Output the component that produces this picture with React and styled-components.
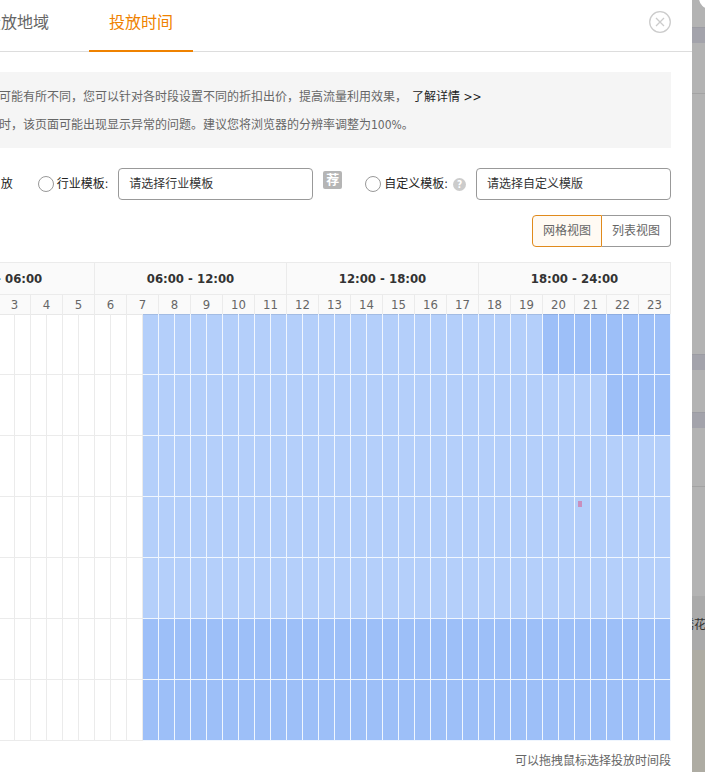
import React from "react";
import styled, { createGlobalStyle, css } from "styled-components";

const GlobalStyle = createGlobalStyle`
  *, *::before, *::after { box-sizing: border-box; }
  body {
    margin: 0;
    background: #fff;
    color: #666;
    font-family: "DejaVu Sans Condensed", "Noto Sans", "Noto Sans CJK SC", sans-serif;
    font-size: 12px;
    line-height: 20px;
  }
  button, select, input { font: inherit; margin: 0; }
`;

const Page = styled.div`
  display: flex;
  min-height: 100vh;
  overflow: hidden;
`;

/* The dialog is wider than the window and runs out of it on the left. */
const Dialog = styled.main`
  flex: 1;
  min-width: 0;
  margin-left: -118px;
  background: #fff;
`;

const Header = styled.header`
  display: flex;
  justify-content: space-between;
  align-items: flex-start;
  height: 52px;
  padding: 0 21px 0 83px;
  border-bottom: 1px solid #ddd;
`;

const Tabs = styled.nav`
  display: flex;
  gap: 20px;
`;

const Tab = styled.a`
  height: 52px;
  padding: 0 20px;
  border-bottom: 2px solid ${(p) => (p.$active ? "#ef8200" : "transparent")};
  color: ${(p) => (p.$active ? "#ef8200" : "#666")};
  font-size: 16px;
  line-height: 46px;
  text-decoration: none;
  white-space: nowrap;
`;

const CloseButton = styled.button`
  display: flex;
  margin-top: 11px;
  padding: 0;
  border: 0;
  background: none;
  color: #ccc;
`;

const Body = styled.div`
  padding: 20px 21px 0;
`;

const Notice = styled.section`
  padding: 11px 20px 9px 96px;
  background: #f5f5f5;
  line-height: 28px;
  white-space: nowrap;
  p { margin: 0; }
  a { margin-left: 5px; color: #222; text-decoration: none; }
`;

const TemplateRow = styled.div`
  display: flex;
  justify-content: flex-end;
  align-items: center;
  height: 32px;
  margin-top: 20px;
  color: #222;
  white-space: nowrap;
`;

const RadioLabel = styled.label`
  display: flex;
  align-items: center;
  gap: 3px;
  margin-left: ${(p) => p.$before || 0}px;
`;

const Radio = styled.input`
  appearance: none;
  width: 16px;
  height: 16px;
  border: 1px solid #999;
  border-radius: 50%;
  background: #fff;
  &:checked { border: 5px solid #ef8200; }
`;

const Select = styled.select`
  appearance: none;
  width: 195px;
  height: 32px;
  margin-left: 10px;
  padding: 0 10px;
  border: 1px solid #999;
  border-radius: 4px;
  background: #fff;
  color: #333;
`;

const Badge = styled.span`
  align-self: flex-start;
  width: 19px;
  height: 18px;
  margin: 3px 0 0 10px;
  border-radius: 2px;
  background: #b5b5b5;
  color: #fff;
  font-size: 13px;
  font-weight: 700;
  line-height: 18px;
  text-align: center;
`;

const Help = styled.span`
  width: 13px;
  height: 13px;
  margin-left: 5px;
  border-radius: 50%;
  background: #ccc;
  color: #fff;
  font-size: 10px;
  font-weight: 700;
  line-height: 13px;
  text-align: center;
`;

const ViewSwitch = styled.div`
  display: flex;
  justify-content: flex-end;
  margin: 15px 0;
`;

const ViewButton = styled.button`
  height: 32px;
  padding: 0 10px;
  border: 1px solid #999;
  border-left-width: 0;
  border-radius: 0 4px 4px 0;
  background: #fff;
  color: #666;
  ${(p) =>
    p.$active &&
    css`
      border: 1px solid #e08a1c;
      border-radius: 4px 0 0 4px;
      background: #fffaf3;
    `}
`;

const Schedule = styled.table`
  width: 100%;
  table-layout: fixed;
  border-spacing: 0;
  border-top: 1px solid #ebebeb;
`;

const PeriodCell = styled.th`
  height: 32px;
  padding: 0;
  border: solid #ebebeb;
  border-width: 0 1px 1px 0;
  background: #fafafa;
  color: #333;
  font-size: 13px;
  font-weight: 700;
`;

const HourCell = styled.th`
  height: 19px;
  padding: 0;
  border-right: 1px solid #ebebeb;
  background: #fafafa;
  font-size: 13px;
  font-weight: 400;
  line-height: 19px;
`;

const levels = {
  off: { fill: "#fff", line: "#ebebeb" },
  low: { fill: "#b4cffa", line: "#f0f6fe" },
  high: { fill: "#9dbff8", line: "#f0f6fe" },
};

const Slot = styled.td`
  position: relative;
  height: 61px;
  padding: 0;
  border: solid ${(p) => levels[p.$level].line};
  border-width: 0 1px 1px 0;
  background: ${(p) => levels[p.$level].fill};
  tr:first-child > & { box-shadow: inset 0 1px rgba(0, 0, 0, 0.09); }
`;

const Mark = styled.span`
  position: absolute;
  top: 4px;
  left: 3px;
  width: 4px;
  height: 6px;
  background: #c98fbd;
`;

const Hint = styled.p`
  margin: 10px 0 0;
  text-align: right;
`;

const Backdrop = styled.aside`
  position: relative;
  flex: none;
  width: 13px;
  overflow: hidden;
  background: #aeaca3;
`;

const Band = styled.div`
  height: ${(p) => p.$height}px;
  background: ${(p) => p.$fill || "#b3b3b3"};
  border-top: 1px solid ${(p) => p.$line || p.$fill || "#b3b3b3"};
`;

const BandText = styled.div`
  margin: 18px 0 0 -10px;
  color: #333;
  white-space: nowrap;
`;

const Corner = styled.div`
  position: absolute;
  top: -13px;
  right: -16px;
  width: 22px;
  height: 22px;
  border-radius: 50%;
  background: #fff;
`;

const periods = ["00:00 - 06:00", "06:00 - 12:00", "12:00 - 18:00", "18:00 - 24:00"];
const hours = Array.from({ length: 24 }, (_, i) => i);
const slots = Array.from({ length: 48 }, (_, i) => i);

/* For each weekday, the half-hour slot where the higher rate begins. */
const highFrom = [40, 44, 48, 48, 48, 15, 15];
const firstSlot = 15;

function levelOf(day, slot) {
  if (slot < firstSlot) return "off";
  return slot >= highFrom[day] ? "high" : "low";
}

export default function App() {
  return (
    <Page>
      <GlobalStyle />
      <Dialog>
        <Header>
          <Tabs>
            <Tab href="#region">投放地域</Tab>
            <Tab href="#time" $active>投放时间</Tab>
          </Tabs>
          <CloseButton type="button" aria-label="关闭">
            <svg width="22" height="22" viewBox="0 0 22 22" fill="none" stroke="currentColor">
              <circle cx="11" cy="11" r="10.3" strokeWidth="1.3" />
              <path d="M7 7l8 8M15 7l-8 8" strokeWidth="1.3" />
            </svg>
          </CloseButton>
        </Header>
        <Body>
          <Notice>
            <p>
              可能有所不同，您可以针对各时段设置不同的折扣出价，提高流量利用效果，
              <a href="#more">了解详情 &gt;&gt;</a>
            </p>
            <p>时，该页面可能出现显示异常的问题。建议您将浏览器的分辨率调整为100%。</p>
          </Notice>
          <TemplateRow>
            <span>放</span>
            <RadioLabel $before={25}>
              <Radio type="radio" name="template" />
              行业模板:
            </RadioLabel>
            <Select aria-label="行业模板">
              <option>请选择行业模板</option>
            </Select>
            <Badge>荐</Badge>
            <RadioLabel $before={23}>
              <Radio type="radio" name="template" />
              自定义模板:
            </RadioLabel>
            <Help>?</Help>
            <Select aria-label="自定义模板">
              <option>请选择自定义模版</option>
            </Select>
          </TemplateRow>
          <ViewSwitch>
            <ViewButton type="button" $active>网格视图</ViewButton>
            <ViewButton type="button">列表视图</ViewButton>
          </ViewSwitch>
          <Schedule>
            <thead>
              <tr>
                {periods.map((p) => (
                  <PeriodCell key={p} colSpan={12}>{p}</PeriodCell>
                ))}
              </tr>
              <tr>
                {hours.map((h) => (
                  <HourCell key={h} colSpan={2}>{h}</HourCell>
                ))}
              </tr>
            </thead>
            <tbody>
              {highFrom.map((_, day) => (
                <tr key={day}>
                  {slots.map((slot) => (
                    <Slot key={slot} $level={levelOf(day, slot)}>
                      {day === 3 && slot === 42 && <Mark />}
                    </Slot>
                  ))}
                </tr>
              ))}
            </tbody>
          </Schedule>
          <Hint>可以拖拽鼠标选择投放时间段</Hint>
        </Body>
      </Dialog>
      <Backdrop>
        <Band $height={27} />
        <Band $height={16} $fill="#a3a3ab" $line="#9c9ca3" />
        <Band $height={50} />
        <Band $height={261} $line="#a3a3a3" />
        <Band $height={16} $fill="#a3a3ab" $line="#9c9ca3" />
        <Band $height={42} />
        <Band $height={16} $fill="#a3a3ab" $line="#9c9ca3" />
        <Band $height={58} />
        <Band $height={110} $line="#a3a3a3" />
        <Band $height={54} $fill="#aaa">
          <BandText>绣花</BandText>
        </Band>
        <Corner />
      </Backdrop>
    </Page>
  );
}
